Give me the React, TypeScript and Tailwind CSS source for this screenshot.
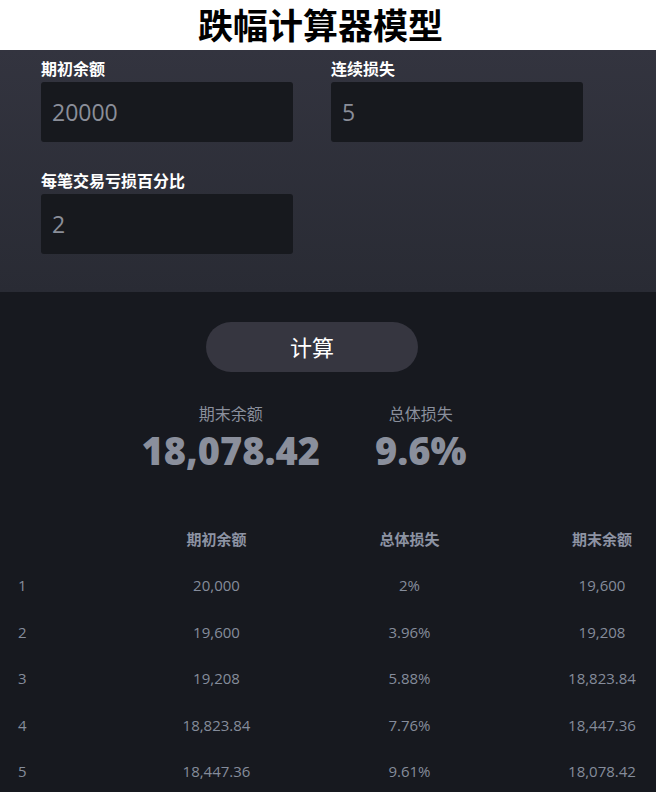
import React from 'react';

const FONT = { fontFamily: '"Open Sans", "Noto Sans CJK SC", sans-serif' };

const rows = [
  ['1', '20,000', '2%', '19,600'],
  ['2', '19,600', '3.96%', '19,208'],
  ['3', '19,208', '5.88%', '18,823.84'],
  ['4', '18,823.84', '7.76%', '18,447.36'],
  ['5', '18,447.36', '9.61%', '18,078.42'],
];

function Field({ label, value }: { label: string; value: string }) {
  return (
    <div className="flex flex-col">
      <label className="text-[16px] font-bold leading-[20px] text-white">{label}</label>
      <input
        readOnly
        value={value}
        className="mt-[3px] h-[60px] w-[252px] rounded-[3px] bg-[#17191e] px-[11px] text-[23px] text-[#8a8e99] outline-none"
      />
    </div>
  );
}

export default function App() {
  return (
    <div className="min-h-[792px] bg-[#17191f]" style={FONT}>
      <h1 className="flex h-[50px] items-center justify-center bg-white pr-[15px] text-[35px] font-bold leading-none text-black">
        跌幅计算器模型
      </h1>

      <div className="bg-gradient-to-b from-[#33343f] to-[#292b34] pb-[38px] pl-[41px] pt-[9px]">
        <div className="grid w-fit grid-cols-[252px_252px] gap-x-[38px] gap-y-[29px]">
          <Field label="期初余额" value="20000" />
          <Field label="连续损失" value="5" />
          <Field label="每笔交易亏损百分比" value="2" />
        </div>
      </div>

      <div className="flex justify-center pr-[32px] pt-[30px]">
        <button className="h-[50px] w-[212px] rounded-full bg-[#363640] text-[22px] text-white">计算</button>
      </div>

      <div className="mt-[32px] flex justify-center gap-[55px] pr-[48px] text-[#8a8f9c]">
        <div className="flex flex-col items-center">
          <span className="text-[16px] leading-[20px]">期末余额</span>
          <span className="mt-[4px] text-[38px] font-extrabold leading-[44px]">18,078.42</span>
        </div>
        <div className="flex flex-col items-center">
          <span className="text-[16px] leading-[20px]">总体损失</span>
          <span className="mt-[4px] text-[38px] font-extrabold leading-[44px]">9.6%</span>
        </div>
      </div>

      <div className="mt-[44px]">
        <div className="grid h-[46px] grid-cols-[120px_193px_193px_150px] items-center text-[15px] font-bold text-[#8d93a3]">
          <span></span>
          <span className="text-center">期初余额</span>
          <span className="text-center">总体损失</span>
          <span className="pl-[42px] text-center">期末余额</span>
        </div>
        {rows.map((r) => (
          <div
            key={r[0]}
            className="grid h-[46.5px] grid-cols-[120px_193px_193px_150px] items-center text-[15px] text-[#858c9b]"
          >
            <span className="pl-[18px]">{r[0]}</span>
            <span className="text-center">{r[1]}</span>
            <span className="text-center">{r[2]}</span>
            <span className="pl-[42px] text-center">{r[3]}</span>
          </div>
        ))}
      </div>
    </div>
  );
}
